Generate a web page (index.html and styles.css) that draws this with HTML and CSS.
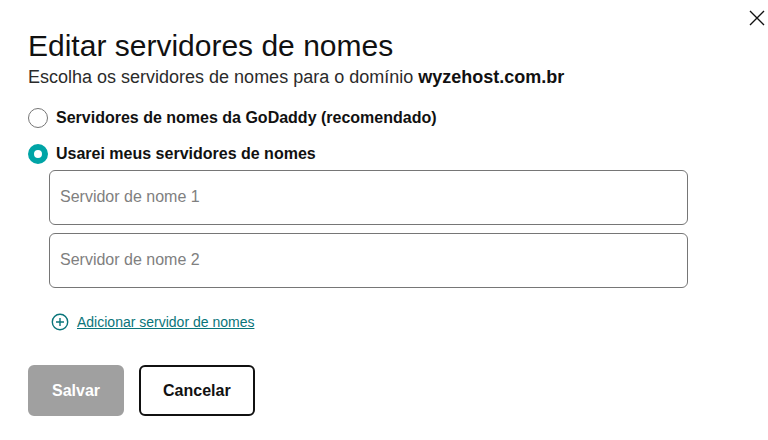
FILE: index.html
```html
<!DOCTYPE html>
<html lang="pt-BR">
<head>
<meta charset="utf-8">
<meta name="viewport" content="width=device-width, initial-scale=1">
<title>Editar servidores de nomes</title>
<link rel="stylesheet" href="styles.css">
</head>
<body>
<main class="dialog">
  <button class="close" type="button" aria-label="Fechar">
    <svg viewBox="0 0 16 16" width="16" height="16" aria-hidden="true"><path d="M1 1L15 15M15 1L1 15"/></svg>
  </button>
  <h1 class="title">Editar servidores de nomes</h1>
  <p class="intro">Escolha os servidores de nomes para o domínio <strong>wyzehost.com.br</strong></p>
  <form class="form">
    <div class="options">
      <label class="option"><input class="radio" type="radio" name="ns">Servidores de nomes da GoDaddy (recomendado)</label>
      <label class="option"><input class="radio" type="radio" name="ns" checked>Usarei meus servidores de nomes</label>
    </div>
    <div class="servers">
      <input class="field" type="text" placeholder="Servidor de nome 1" aria-label="Servidor de nome 1">
      <input class="field" type="text" placeholder="Servidor de nome 2" aria-label="Servidor de nome 2">
    </div>
    <a class="add" href="#">
      <svg viewBox="0 0 18 18" width="18" height="18" aria-hidden="true"><circle cx="9" cy="9" r="7.7"/><path d="M9 5V13M5 9H13"/></svg>
      <span class="add-text">Adicionar servidor de nomes</span>
    </a>
    <div class="actions">
      <button class="button save" type="submit" disabled>Salvar</button>
      <button class="button cancel" type="button">Cancelar</button>
    </div>
  </form>
</main>
</body>
</html>
```
FILE: styles.css
```css
* {
  box-sizing: border-box;
}

body {
  margin: 0;
  background: #fff;
  color: #111;
  font-family: "Liberation Sans", Arial, sans-serif;
  font-size: 16px;
  line-height: 20px;
}

.dialog {
  position: relative;
  padding: 28px 80px 24px 28px;
}

.close {
  position: absolute;
  top: 10px;
  right: 3px;
  display: flex;
  padding: 0;
  border: 0;
  background: none;
}

.close svg {
  fill: none;
  stroke: #111;
  stroke-width: 1.4;
}

.title {
  margin: 0;
  font-size: 30px;
  font-weight: 400;
  line-height: 36px;
}

.intro {
  margin: 0 0 18px;
  font-size: 18px;
  line-height: 26px;
  color: #2b2b2b;
}

.intro strong {
  color: #111;
}

.options {
  display: flex;
  flex-direction: column;
  gap: 16px;
}

.option {
  display: flex;
  align-items: center;
  gap: 8px;
  font-weight: 700;
}

.radio {
  appearance: none;
  width: 20px;
  height: 20px;
  margin: 0;
  border: 1px solid #767676;
  border-radius: 50%;
  background: #fff;
}

.radio:checked {
  border: 6px solid #00a4a6;
}

.servers {
  display: flex;
  flex-direction: column;
  gap: 8px;
  margin: 6px 0 24px 21px;
}

.field {
  width: 100%;
  height: 55px;
  padding: 0 10px 2px;
  border: 1px solid #767676;
  border-radius: 6px;
  background: #fff;
  color: #111;
  font: inherit;
}

.field::placeholder {
  color: #808080;
  opacity: 1;
}

.add {
  display: flex;
  align-items: center;
  gap: 8px;
  width: fit-content;
  margin: 0 0 33px 23px;
  color: #09757a;
  font-size: 14px;
  text-decoration: none;
}

.add-text {
  text-decoration: underline;
}

.add svg {
  fill: none;
  stroke: currentColor;
  stroke-width: 1.4;
}

.actions {
  display: flex;
  gap: 15px;
}

.button {
  height: 51px;
  padding: 0 22px;
  border: 2px solid #111;
  border-radius: 6px;
  background: #fff;
  color: #111;
  font: inherit;
  font-weight: 700;
}

.save {
  border-color: #a0a0a0;
  background: #a0a0a0;
  color: #fff;
}
```
